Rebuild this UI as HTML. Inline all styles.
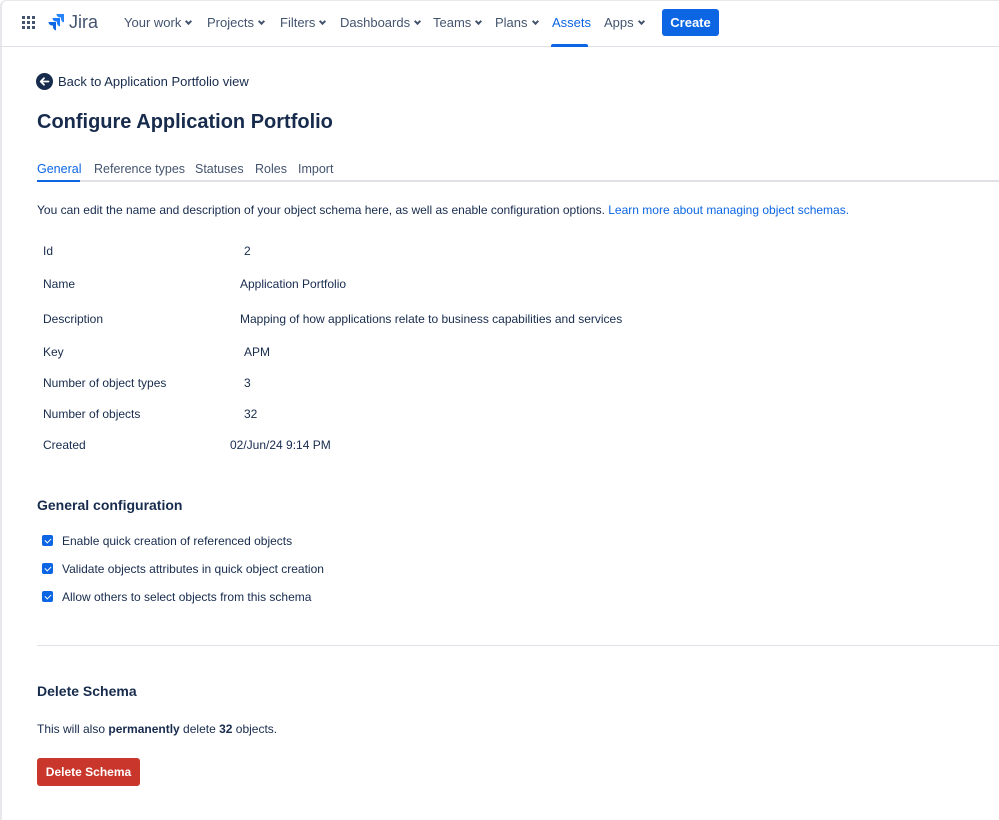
<!DOCTYPE html>
<html><head><meta charset="utf-8"><style>
*{margin:0;padding:0;box-sizing:border-box}
body{width:999px;height:799px;overflow:hidden;background:#fff;font-family:"Liberation Sans",sans-serif;color:#172b4d;font-size:12px;position:relative}
div,span{white-space:nowrap}
.frame{position:absolute;left:0;top:0;width:1010px;height:820px;border-left:2px solid #e6e8eb;border-top:1px solid #e6e8eb;border-radius:6px 0 0 0}
.nav{position:absolute;left:0;top:0;width:999px;height:47px;border-bottom:1px solid #dfe1e6}
.nav .it{position:absolute;top:15px;font-size:13px;color:#44546f}
.chev{display:inline-block;width:5px;height:5px;border-right:2px solid #44546f;border-bottom:2px solid #44546f;transform:rotate(45deg);margin-left:5px;position:relative;top:-3px}
.abs{position:absolute}
.row{position:absolute;left:43px;font-size:12px}
.val{position:absolute}
.tab{position:absolute;top:162px;font-size:12.5px;color:#44546f}
.cb{position:absolute;left:42px;width:11px;height:11px;background:#0c66e4;border-radius:2px}
.cb:after{content:"";position:absolute;left:3.5px;top:1.5px;width:3px;height:5px;border-right:1.6px solid #fff;border-bottom:1.6px solid #fff;transform:rotate(45deg)}
</style></head><body>
<div class="frame"></div>
<div class="nav">
  <svg class="abs" style="left:22px;top:16px" width="14" height="14" viewBox="0 0 14 14" fill="#44546f">
    <rect x="0" y="0" width="3" height="3"/><rect x="5" y="0" width="3" height="3"/><rect x="10" y="0" width="3" height="3"/>
    <rect x="0" y="5" width="3" height="3"/><rect x="5" y="5" width="3" height="3"/><rect x="10" y="5" width="3" height="3"/>
    <rect x="0" y="10" width="3" height="3"/><rect x="5" y="10" width="3" height="3"/><rect x="10" y="10" width="3" height="3"/></svg>
  <svg class="abs" style="left:47px;top:13px" width="18" height="19" viewBox="0 0 18 19">
    <path d="M17 1H9.5a3.5 3.5 0 0 0 3.5 3.5H14v1.5a3.5 3.5 0 0 0 3 3.4z" fill="#2684ff"/>
    <path d="M13 5H5.5a3.5 3.5 0 0 0 3.5 3.5H10v1.5a3.5 3.5 0 0 0 3 3.4z" fill="#1d7afc"/>
    <path d="M9 9H1.5A3.5 3.5 0 0 0 5 12.5H6v1.5a3.5 3.5 0 0 0 3 3.4z" fill="#0c66e4"/></svg>
  <div class="abs" style="left:69px;top:12px;font-size:18px;color:#44546f">Jira</div>
  <div class="it" style="left:124px">Your work<span class="chev"></span></div>
  <div class="it" style="left:207px">Projects<span class="chev"></span></div>
  <div class="it" style="left:280px">Filters<span class="chev"></span></div>
  <div class="it" style="left:340px">Dashboards<span class="chev"></span></div>
  <div class="it" style="left:433px">Teams<span class="chev"></span></div>
  <div class="it" style="left:495px">Plans<span class="chev"></span></div>
  <div class="it" style="left:552px;color:#0c66e4">Assets</div>
  <div class="abs" style="left:551px;top:44px;width:37px;height:3px;background:#0c66e4;border-radius:2px 2px 0 0"></div>
  <div class="it" style="left:604px">Apps<span class="chev"></span></div>
  <div class="abs" style="left:662px;top:9px;width:57px;height:27px;background:#0c66e4;border-radius:3px;color:#fff;font-weight:bold;font-size:13px;text-align:center;line-height:27px">Create</div>
</div>
<svg class="abs" style="left:36px;top:73px" width="17" height="17" viewBox="0 0 17 17"><circle cx="8.5" cy="8.5" r="8.5" fill="#172b4d"/><path d="M12.5 8.5H5M8 5.2L4.7 8.5 8 11.8" stroke="#fff" stroke-width="1.8" fill="none" stroke-linecap="round" stroke-linejoin="round"/></svg>
<div class="abs" style="left:58px;top:74px;font-size:13px">Back to Application Portfolio view</div>
<div class="abs" style="left:37px;top:111px;font-size:20px;font-weight:bold">Configure Application Portfolio</div>
<div class="tab" style="left:37px;color:#0c66e4">General</div>
<div class="tab" style="left:94px">Reference types</div>
<div class="tab" style="left:195px">Statuses</div>
<div class="tab" style="left:255px">Roles</div>
<div class="tab" style="left:298px">Import</div>
<div class="abs" style="left:37px;top:180px;width:962px;height:2px;background:#dfe1e6"></div>
<div class="abs" style="left:37px;top:180px;width:43px;height:2px;background:#0c66e4"></div>
<div class="abs" style="left:37px;top:203px;font-size:12px">You can edit the name and description of your object schema here, as well as enable configuration options. <span style="color:#0c66e4">Learn more about managing object schemas.</span></div>
<div class="row" style="top:244px">Id<span class="val" style="left:201px">2</span></div>
<div class="row" style="top:277px">Name<span class="val" style="left:197px">Application Portfolio</span></div>
<div class="row" style="top:312px">Description<span class="val" style="left:197px">Mapping of how applications relate to business capabilities and services</span></div>
<div class="row" style="top:345px">Key<span class="val" style="left:201px">APM</span></div>
<div class="row" style="top:376px">Number of object types<span class="val" style="left:201px">3</span></div>
<div class="row" style="top:407px">Number of objects<span class="val" style="left:201px">32</span></div>
<div class="row" style="top:438px">Created<span class="val" style="left:187px">02/Jun/24 9:14 PM</span></div>
<div class="abs" style="left:37px;top:497px;font-size:14px;font-weight:bold">General configuration</div>
<div class="cb" style="top:535px"></div><div class="abs" style="left:62px;top:534px">Enable quick creation of referenced objects</div>
<div class="cb" style="top:563px"></div><div class="abs" style="left:62px;top:562px">Validate objects attributes in quick object creation</div>
<div class="cb" style="top:591px"></div><div class="abs" style="left:62px;top:590px">Allow others to select objects from this schema</div>
<div class="abs" style="left:37px;top:645px;width:962px;height:1px;background:#dfe1e6"></div>
<div class="abs" style="left:37px;top:683px;font-size:14px;font-weight:bold">Delete Schema</div>
<div class="abs" style="left:37px;top:722px">This will also <b>permanently</b> delete <b>32</b> objects.</div>
<div class="abs" style="left:37px;top:758px;width:103px;height:28px;background:#c9372c;border-radius:3px;color:#fff;font-weight:bold;font-size:12px;text-align:center;line-height:28px">Delete Schema</div>
</body></html>
